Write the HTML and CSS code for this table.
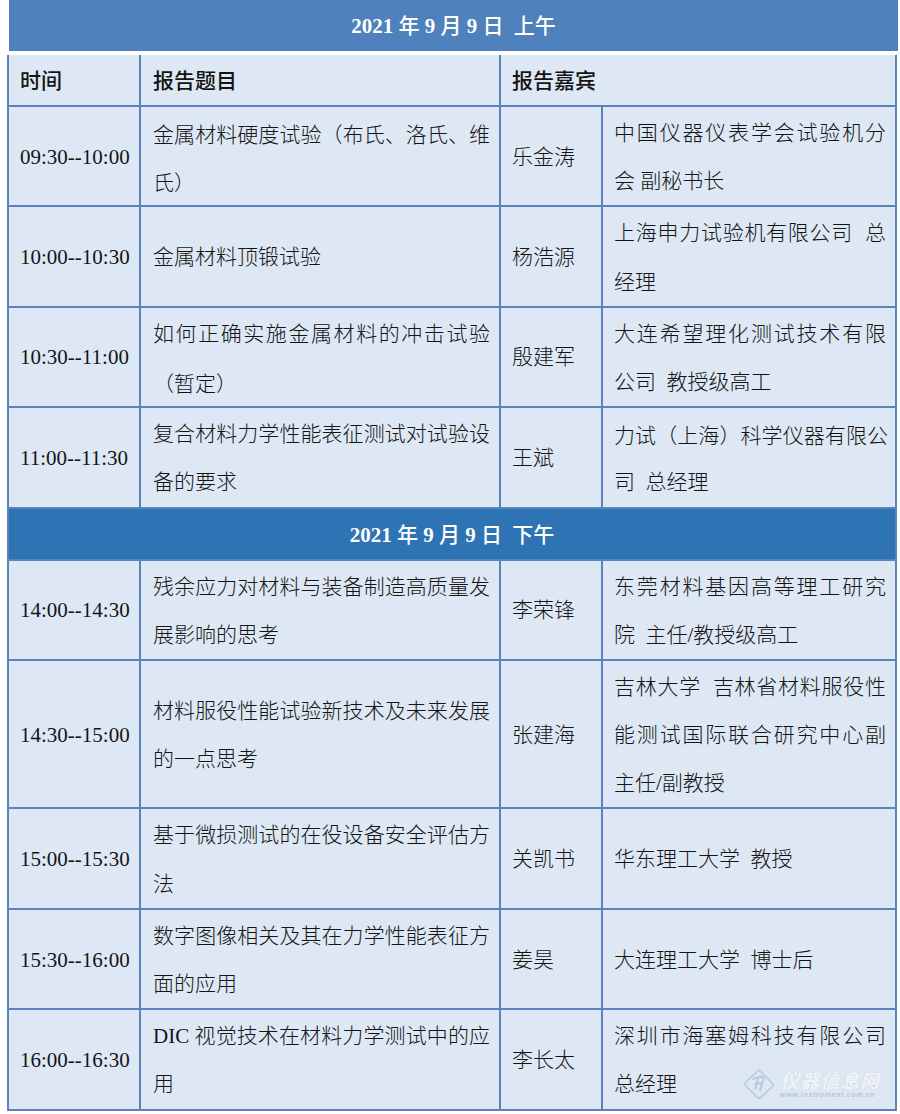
FILE: index.html
```html
<!DOCTYPE html>
<html lang="zh-CN">
<head>
<meta charset="utf-8">
<title>日程</title>
<link rel="stylesheet" href="styles.css">
</head>
<body>
<div class="page">
  <div class="top-head"><span class="num">2021</span> 年 <span class="num">9</span> 月 <span class="num">9</span> 日&nbsp; 上午</div>
  <div class="grid">
    <div class="cell hd"><div class="tx">时间</div></div>
    <div class="cell hd c2"><div class="tx">报告题目</div></div>
    <div class="cell hd span2"><div class="tx">报告嘉宾</div></div>

    <div class="cell time"><div class="tx">09:30--10:00</div></div>
    <div class="cell c2"><div class="tx"><span class="ln">金属材料硬度试验<span class="fw">（</span>布氏、洛氏、维</span><span class="ln end">氏<span class="fw">）</span></span></div></div>
    <div class="cell"><div class="tx">乐金涛</div></div>
    <div class="cell c4"><div class="tx"><span class="ln">中国仪器仪表学会试验机分</span><span class="ln end">会 副秘书长</span></div></div>

    <div class="cell time"><div class="tx">10:00--10:30</div></div>
    <div class="cell c2"><div class="tx">金属材料顶锻试验</div></div>
    <div class="cell"><div class="tx">杨浩源</div></div>
    <div class="cell c4"><div class="tx"><span class="ln">上海申力试验机有限公司&nbsp; 总</span><span class="ln end">经理</span></div></div>

    <div class="cell time"><div class="tx">10:30--11:00</div></div>
    <div class="cell c2"><div class="tx"><span class="ln">如何正确实施金属材料的冲击试验</span><span class="ln end"><span class="fw">（</span>暂定<span class="fw">）</span></span></div></div>
    <div class="cell"><div class="tx">殷建军</div></div>
    <div class="cell c4"><div class="tx"><span class="ln">大连希望理化测试技术有限</span><span class="ln end">公司&nbsp; 教授级高工</span></div></div>

    <div class="cell time"><div class="tx">11:00--11:30</div></div>
    <div class="cell c2"><div class="tx"><span class="ln">复合材料力学性能表征测试对试验设</span><span class="ln end">备的要求</span></div></div>
    <div class="cell"><div class="tx">王斌</div></div>
    <div class="cell c4"><div class="tx"><span class="ln tight">力试<span class="fw">（</span>上海<span class="fw">）</span>科学仪器有限公</span><span class="ln end">司&nbsp; 总经理</span></div></div>

    <div class="sec-head"><span class="num">2021</span> 年 <span class="num">9</span> 月 <span class="num">9</span> 日&nbsp; 下午</div>

    <div class="cell time"><div class="tx">14:00--14:30</div></div>
    <div class="cell c2"><div class="tx"><span class="ln">残余应力对材料与装备制造高质量发</span><span class="ln end">展影响的思考</span></div></div>
    <div class="cell"><div class="tx">李荣锋</div></div>
    <div class="cell c4"><div class="tx"><span class="ln">东莞材料基因高等理工研究</span><span class="ln end">院&nbsp; 主任/教授级高工</span></div></div>

    <div class="cell time"><div class="tx">14:30--15:00</div></div>
    <div class="cell c2"><div class="tx"><span class="ln">材料服役性能试验新技术及未来发展</span><span class="ln end">的一点思考</span></div></div>
    <div class="cell"><div class="tx">张建海</div></div>
    <div class="cell c4"><div class="tx"><span class="ln">吉林大学&nbsp; 吉林省材料服役性</span><span class="ln">能测试国际联合研究中心副</span><span class="ln end">主任/副教授</span></div></div>

    <div class="cell time"><div class="tx">15:00--15:30</div></div>
    <div class="cell c2"><div class="tx"><span class="ln">基于微损测试的在役设备安全评估方</span><span class="ln end">法</span></div></div>
    <div class="cell"><div class="tx">关凯书</div></div>
    <div class="cell c4"><div class="tx">华东理工大学&nbsp; 教授</div></div>

    <div class="cell time"><div class="tx">15:30--16:00</div></div>
    <div class="cell c2"><div class="tx"><span class="ln">数字图像相关及其在力学性能表征方</span><span class="ln end">面的应用</span></div></div>
    <div class="cell"><div class="tx">姜昊</div></div>
    <div class="cell c4"><div class="tx">大连理工大学&nbsp; 博士后</div></div>

    <div class="cell time"><div class="tx">16:00--16:30</div></div>
    <div class="cell c2"><div class="tx"><span class="ln">DIC 视觉技术在材料力学测试中的应</span><span class="ln end">用</span></div></div>
    <div class="cell"><div class="tx">李长太</div></div>
    <div class="cell c4"><div class="tx"><span class="ln">深圳市海塞姆科技有限公司</span><span class="ln end">总经理</span></div>
      <div class="wm">
        <svg class="wm-icon" width="32" height="32" viewBox="0 0 34 34">
          <path d="M17 2 L31 16 Q33 18 31 20 L19 31 Q17 33 15 31 L3 19 Q1 17 3 15 Z" fill="none" stroke="rgba(160,178,200,0.5)" stroke-width="2"/>
          <path d="M11 12 Q14 9 16 11 L13 22 M17 10 Q21 8 22 11 L18 24 M13 17 L20 16" fill="none" stroke="rgba(160,178,200,0.55)" stroke-width="2.2" stroke-linecap="round"/>
        </svg>
        <div class="wm-text">
          <div class="wm-name">仪器信息网</div>
          <div class="wm-url">www.instrument.com.cn</div>
        </div>
      </div>
    </div>
  </div>
</div>
</body>
</html>
```
FILE: styles.css
```css
html, body {
  margin: 0;
  padding: 0;
  background: #ffffff;
}
body {
  font-family: "Liberation Serif", "Noto Sans CJK SC", serif;
  font-size: 21px;
  color: #141414;
}
.page {
  width: 890px;
  margin-left: 7px;
}
.top-head {
  margin-left: 2px;
  width: 889px;
  height: 51px;
  line-height: 53px;
  background: #4f81bd;
  color: #ffffff;
  text-align: center;
  font-weight: 500;
  margin-bottom: 4px;
}
.num {
  font-weight: 700;
}
.grid {
  display: grid;
  grid-template-columns: 130px 358px 100px 292px;
  gap: 2px;
  padding: 0 2px 2px 2px;
  background: #5a84b9;
}
.cell {
  background: #dee8f4;
  display: flex;
  align-items: center;
  padding: 2px 9px 0 11px;
  line-height: 49px;
  font-weight: 300;
  position: relative;
}
.cell.c2 {
  padding: 2px 9px 0 12px;
}
.cell.c4 {
  padding: 2px 9px 0 11px;
}
.cell.time .tx {
  white-space: nowrap;
}
.tx {
  width: 100%;
}
.fw {
  font-family: "Noto Sans CJK SC", sans-serif;
}
.ln {
  display: block;
  height: 48.2px;
  text-align: justify;
  text-align-last: justify;
}
.ln.tight {
  letter-spacing: -2px;
}
.ln.end {
  text-align-last: left;
}
.hd {
  font-weight: 500;
}
.hd .tx {
  height: 48px;
}
.span2 {
  grid-column: span 2;
}
.sec-head {
  grid-column: 1 / -1;
  background: #2e74b5;
  color: #ffffff;
  text-align: center;
  height: 50px;
  line-height: 52px;
  font-weight: 500;
}
.wm {
  position: absolute;
  left: 140px;
  top: 58px;
  display: flex;
  align-items: center;
  gap: 5px;
  pointer-events: none;
}
.wm-text {
  display: flex;
  flex-direction: column;
  align-items: flex-start;
}
.wm-name {
  font-family: "Noto Sans CJK SC", sans-serif;
  font-weight: 900;
  font-style: italic;
  font-size: 19px;
  line-height: 20px;
  letter-spacing: 1px;
  color: rgba(255, 255, 255, 0.8);
  text-shadow: 0 0 1px rgba(140, 160, 190, 0.55);
}
.wm-url {
  font-family: "Liberation Sans", sans-serif;
  font-weight: 700;
  font-style: italic;
  font-size: 7px;
  line-height: 9px;
  letter-spacing: 0.7px;
  color: rgba(150, 170, 195, 0.6);
}
```
